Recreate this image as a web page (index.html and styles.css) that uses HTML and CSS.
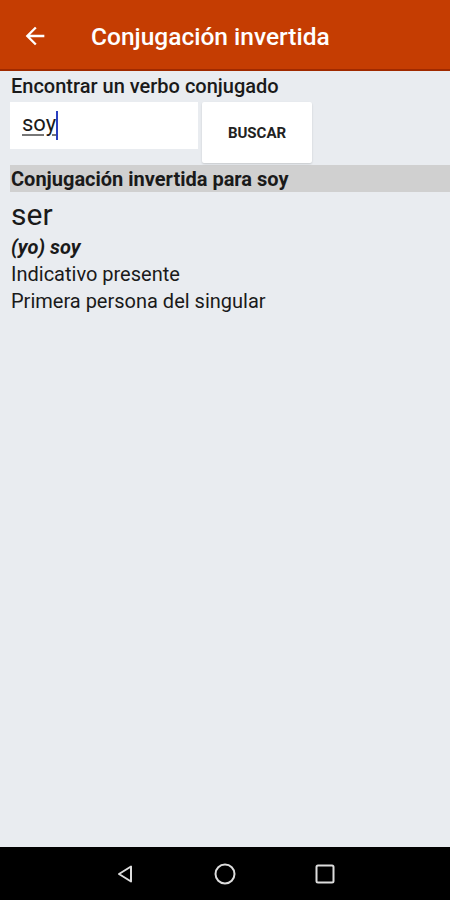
FILE: index.html
```html
<!DOCTYPE html>
<html lang="es">
<head>
    <meta charset="UTF-8">
    <meta name="viewport" content="width=device-width, initial-scale=1.0">
    <title>Conjugación invertida</title>
    <link rel="stylesheet" href="styles.css">
</head>
<body>
    <div class="screen">
        <header class="appbar">
            <svg class="back" width="28" height="28" viewBox="0 0 24 24">
                <path d="M20 11H7.83l5.59-5.59L12 4l-8 8 8 8 1.41-1.41L7.83 13H20v-2z" fill="#fff"/>
            </svg>
            <h1>Conjugación invertida</h1>
        </header>

        <main class="content">
            <label class="label" for="verb">Encontrar un verbo conjugado</label>
            <div class="search">
                <div class="field"><span id="verb">soy</span><span class="caret"></span></div>
                <button class="btn">BUSCAR</button>
            </div>

            <div class="result-title">Conjugación invertida para soy</div>
            <div class="result">
                <div class="infinitive">ser</div>
                <div class="form">(yo) soy</div>
                <div class="line">Indicativo presente</div>
                <div class="line">Primera persona del singular</div>
            </div>
        </main>

        <nav class="navbar">
            <svg width="22" height="22" viewBox="0 0 22 22">
                <path d="M17 3.5v15L5 11z" fill="none" stroke="#ddd" stroke-width="2" stroke-linejoin="round"/>
            </svg>
            <svg width="22" height="22" viewBox="0 0 22 22">
                <circle cx="11" cy="11" r="9.5" fill="none" stroke="#ddd" stroke-width="2"/>
            </svg>
            <svg width="22" height="22" viewBox="0 0 22 22">
                <rect x="2.5" y="2.5" width="17" height="17" rx="1.5" fill="none" stroke="#ddd" stroke-width="2"/>
            </svg>
        </nav>
    </div>
</body>
</html>
```

FILE: styles.css
```css
body {
    margin: 0;
    font-family: Roboto, "Noto Sans", sans-serif;
    background-color: #e9ecf0;
    color: #1a1a1a;
}
.screen {
    height: 900px;
    display: flex;
    flex-direction: column;
}
.appbar {
    height: 71px;
    background-color: #c53d02;
    border-bottom: 2px solid #a02a00;
    display: flex;
    align-items: center;
    box-sizing: border-box;
    padding-left: 21px;
    padding-top: 3px;
}
.appbar h1 {
    margin: 0 0 0 42px;
    color: #fff;
    font-size: 24.5px;
    font-weight: 500;
}
.content {
    flex: 1;
    padding-top: 3px;
}
.label {
    display: block;
    margin-left: 11px;
    font-size: 20px;
    font-weight: 500;
    line-height: 24px;
}
.search {
    display: flex;
    align-items: flex-start;
    gap: 4px;
    margin: 4px 0 0 10px;
}
.field {
    width: 188px;
    height: 47px;
    background-color: #fff;
    box-sizing: border-box;
    padding: 9px 0 0 12px;
    font-size: 22px;
    display: flex;
    align-items: flex-start;
}
.field span#verb {
    text-decoration: underline;
    text-decoration-color: #777;
    text-underline-offset: 3px;
}
.caret {
    width: 2px;
    height: 29px;
    background-color: #2a3fbf;
}
.btn {
    width: 110px;
    height: 61px;
    background-color: #fff;
    border: none;
    border-radius: 2px;
    box-shadow: 0 1px 2px rgba(0, 0, 0, 0.15);
    font-family: Roboto, sans-serif;
    font-size: 15px;
    font-weight: 700;
    color: #222;
    padding: 0;
}
.result-title {
    margin: 2px 0 0 10px;
    height: 27px;
    line-height: 28px;
    padding-left: 1px;
    background-color: #d0d0d0;
    font-size: 20px;
    font-weight: 700;
}
.result {
    padding: 4px 0 0 11px;
    width: 262px;
}
.infinitive {
    font-size: 30px;
    line-height: 37px;
}
.form {
    font-size: 20px;
    font-weight: 700;
    font-style: italic;
    line-height: 28px;
}
.line {
    font-size: 20px;
    line-height: 27px;
}
.navbar {
    height: 53px;
    background-color: #000;
    display: flex;
    justify-content: center;
    align-items: center;
    gap: 78px;
}
```
